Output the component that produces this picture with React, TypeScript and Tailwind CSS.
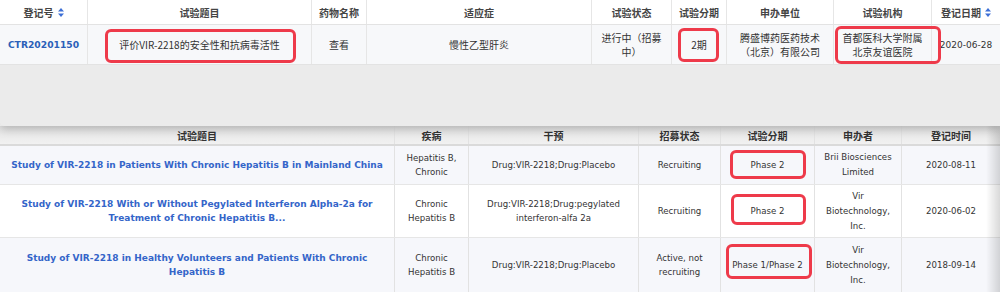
import React from 'react'

const CJK = '"Noto Sans CJK SC", "Noto Sans", sans-serif'
const VER = '"DejaVu Sans", "Noto Sans CJK SC", sans-serif'

function SortIcon() {
  return (
    <svg width="6" height="9" viewBox="0 0 6 9" className="ml-[4px] inline-block">
      <path d="M3 0 L6 3.6 H0 Z" fill="#3d6fd6" />
      <path d="M3 9 L6 5.4 H0 Z" fill="#3d6fd6" />
    </svg>
  )
}

function Mark({ className }: { className: string }) {
  return <div className={`absolute z-30 rounded-[6px] border-[3px] border-[#ee3a4a] ${className}`} />
}

const topHead = ['登记号', '试验题目', '药物名称', '适应症', '试验状态', '试验分期', '申办单位', '试验机构', '登记日期']
const botHead = ['试验题目', '疾病', '干预', '招募状态', '试验分期', '申办者', '登记时间']

const rows = [
  {
    title: ['Study of VIR-2218 in Patients With Chronic Hepatitis B in Mainland China'],
    disease: ['Hepatitis B,', 'Chronic'],
    drug: ['Drug:VIR-2218;Drug:Placebo'],
    status: ['Recruiting'],
    phase: 'Phase 2',
    sponsor: ['Brii Biosciences', 'Limited'],
    date: '2020-08-11',
    h: 'h-[39px]',
    bg: 'bg-[#f6f7fb]',
  },
  {
    title: ['Study of VIR-2218 With or Without Pegylated Interferon Alpha-2a for', 'Treatment of Chronic Hepatitis B...'],
    disease: ['Chronic', 'Hepatitis B'],
    drug: ['Drug:VIR-2218;Drug:pegylated', 'interferon-alfa 2a'],
    status: ['Recruiting'],
    phase: 'Phase 2',
    sponsor: ['Vir', 'Biotechnology,', 'Inc.'],
    date: '2020-06-02',
    h: 'h-[53px]',
    bg: 'bg-white',
  },
  {
    title: ['Study of VIR-2218 in Healthy Volunteers and Patients With Chronic', 'Hepatitis B'],
    disease: ['Chronic', 'Hepatitis B'],
    drug: ['Drug:VIR-2218;Drug:Placebo'],
    status: ['Active, not', 'recruiting'],
    phase: 'Phase 1/Phase 2',
    sponsor: ['Vir', 'Biotechnology,', 'Inc.'],
    date: '2018-09-14',
    h: 'h-[55px]',
    bg: 'bg-[#f6f7fb]',
  },
]

function Lines({ lines }: { lines: string[] }) {
  return (
    <>
      {lines.map((l, i) => (
        <div key={i}>{l}</div>
      ))}
    </>
  )
}

export default function App() {
  const topCols = 'grid grid-cols-[88px_224px_55px_225px_80px_55px_107px_98px_68px]'
  const botCols = 'grid grid-cols-[395px_74px_170px_82px_94px_87px_98px]'
  const topCell = 'flex flex-col items-center justify-center text-center border-r border-[#e6e6e6] last:border-r-0'
  const botCell = 'flex flex-col items-center justify-center text-center border-r border-[#e2e2e2] last:border-r-0'

  return (
    <div className="relative w-[1000px] h-[292px] overflow-hidden bg-white">
      {/* upper window */}
      <div className="relative z-20 h-[126px] bg-[#ebebeb] rounded-bl-[4px] shadow-[0_3px_10px_rgba(0,0,0,0.22)]">
        <div className={`${topCols} h-[25px] bg-white border-b border-[#e3e3e3] text-[10px] font-bold text-[#444]`} style={{ fontFamily: CJK }}>
          {topHead.map((h, i) => (
            <div key={h} className={`${topCell} !flex-row`}>
              {h}
              {(i === 0 || i === 8) && <SortIcon />}
            </div>
          ))}
        </div>
        <div className={`${topCols} h-[40px] bg-[#f7f8fa] border-b border-[#e3e3e3] text-[10px] leading-[14px] text-[#333]`} style={{ fontFamily: CJK }}>
          <div className={`${topCell} text-[9.2px] font-bold text-[#2b5fb8]`} style={{ fontFamily: VER }}>CTR20201150</div>
          <div className={topCell}>评价VIR-2218的安全性和抗病毒活性</div>
          <div className={topCell}>查看</div>
          <div className={topCell}>慢性乙型肝炎</div>
          <div className={topCell}>
            <Lines lines={['进行中（招募', '中）']} />
          </div>
          <div className={topCell}>2期</div>
          <div className={topCell}>
            <Lines lines={['腾盛博药医药技术', '（北京）有限公司']} />
          </div>
          <div className={topCell}>
            <Lines lines={['首都医科大学附属', '北京友谊医院']} />
          </div>
          <div className={`${topCell} text-[9px]`} style={{ fontFamily: VER }}>2020-06-28</div>
        </div>
      </div>

      {/* lower table */}
      <div className={`${botCols} h-[20px] bg-gradient-to-b from-[#e4e4e4] to-[#f1f1f1] border-b-2 border-[#dadada] text-[10px] font-bold text-[#333]`} style={{ fontFamily: CJK }}>
        {botHead.map(h => (
          <div key={h} className={`${botCell} border-[#d6d6d6]`}>{h}</div>
        ))}
      </div>
      {rows.map((r, i) => (
        <div key={i} className={`${botCols} ${r.h} ${r.bg} border-b border-[#e6e6e6] text-[8.6px] leading-[15px] text-[#333]`} style={{ fontFamily: VER }}>
          <div className={`${botCell} text-[9px] font-bold leading-[14px] text-[#3465c9]`}>
            <Lines lines={r.title} />
          </div>
          <div className={`${botCell} leading-[14px]`}>
            <Lines lines={r.disease} />
          </div>
          <div className={`${botCell} leading-[14px]`}>
            <Lines lines={r.drug} />
          </div>
          <div className={`${botCell} leading-[14px]`}>
            <Lines lines={r.status} />
          </div>
          <div className={botCell}>{r.phase}</div>
          <div className={botCell}>
            <Lines lines={r.sponsor} />
          </div>
          <div className={botCell}>{r.date}</div>
        </div>
      ))}

      {/* right edge shade */}
      <div className="absolute right-0 top-[126px] bottom-0 w-[14px] bg-gradient-to-r from-transparent to-black/15" />

      {/* annotations */}
      <Mark className="left-[105px] top-[29px] w-[191px] h-[34px]" />
      <Mark className="left-[678px] top-[28px] w-[41px] h-[34px]" />
      <Mark className="left-[835px] top-[26px] w-[106px] h-[38px]" />
      <Mark className="left-[730px] top-[150px] w-[76px] h-[29px]" />
      <Mark className="left-[731px] top-[194px] w-[75px] h-[31px]" />
      <Mark className="left-[726px] top-[244px] w-[86px] h-[35px]" />
    </div>
  )
}
